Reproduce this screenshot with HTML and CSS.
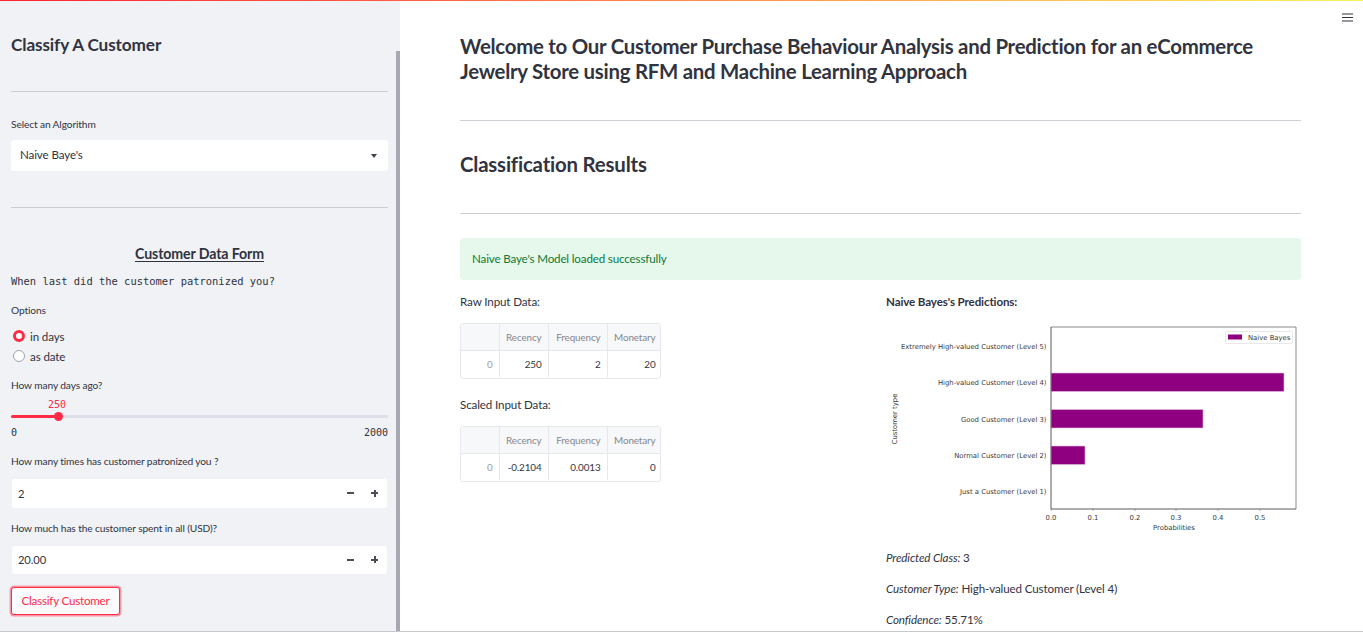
FILE: index.html
```html
<!DOCTYPE html>
<html lang="en">
<head>
<meta charset="utf-8">
<title>Customer Purchase Behaviour</title>
<link rel="stylesheet" href="styles.css">
</head>
<body>
<div class="topline"></div>
<div class="app">
  <aside class="sidebar">
    <div class="scrollthumb"></div>
    <h2 class="side-title">Classify A Customer</h2>
    <hr class="side-rule rule-one">
    <div class="label label-algo">Select an Algorithm</div>
    <div class="select"><span>Naive Baye's</span><span class="caret"></span></div>
    <hr class="side-rule rule-two">
    <h3 class="form-title">Customer Data Form</h3>
    <div class="mono-line">When last did the customer patronized you?</div>
    <div class="label label-options">Options</div>
    <div class="radio-row radio-first"><span class="radio radio-on"></span><span>in days</span></div>
    <div class="radio-row"><span class="radio"></span><span>as date</span></div>
    <div class="label label-days">How many days ago?</div>
    <div class="slider-value">250</div>
    <div class="slider"><div class="slider-fill"></div><div class="slider-knob"></div></div>
    <div class="slider-ends"><span>0</span><span>2000</span></div>
    <div class="label label-times">How many times has customer patronized you ?</div>
    <div class="number tall"><span>2</span><span class="steppers"><span class="step-minus"></span><span class="step-plus"></span></span></div>
    <div class="label label-spent">How much has the customer spent in all (USD)?</div>
    <div class="number"><span>20.00</span><span class="steppers"><span class="step-minus"></span><span class="step-plus"></span></span></div>
    <button class="classify" type="button">Classify Customer</button>
  </aside>
  <main class="main">
    <svg class="menu" width="11" height="9" viewBox="0 0 11 9"><path d="M0 1h11M0 4.500h11M0 8h11" stroke="#31333f" stroke-width="1.1" fill="none"/></svg>
    <h1 class="headline">Welcome to Our Customer Purchase Behaviour Analysis and Prediction for an eCommerce Jewelry Store using RFM and Machine Learning Approach</h1>
    <hr class="main-rule rule-a">
    <h2 class="section">Classification Results</h2>
    <hr class="main-rule rule-b">
    <div class="alert">Naive Baye's Model loaded successfully</div>
    <div class="columns">
      <section class="col-left">
        <p class="caption">Raw Input Data:</p>
        <div class="table-wrap">
          <table>
            <tr><th></th><th>Recency</th><th>Frequency</th><th>Monetary</th></tr>
            <tr><td class="idx">0</td><td>250</td><td>2</td><td>20</td></tr>
          </table>
        </div>
        <p class="caption caption-two">Scaled Input Data:</p>
        <div class="table-wrap">
          <table>
            <tr><th></th><th>Recency</th><th>Frequency</th><th>Monetary</th></tr>
            <tr><td class="idx">0</td><td>-0.2104</td><td>0.0013</td><td>0</td></tr>
          </table>
        </div>
      </section>
      <section class="col-right">
        <p class="caption strong">Naive Bayes's Predictions:</p>
        <svg class="chart" width="415" height="215" viewBox="0 0 415 215">
          <g fill="#8f0080" stroke="#e5bfe1" stroke-width="0.6">
            <rect x="165" y="50" width="233" height="18.5"/>
            <rect x="165" y="86.5" width="152" height="18.5"/>
            <rect x="165" y="123" width="34" height="18.5"/>
          </g>
          <path d="M165 4H410V186" fill="none" stroke="#8a8a8a" stroke-width="1"/>
          <path d="M165 4V186H410" fill="none" stroke="#5a5a5a" stroke-width="1"/>
          <path d="M165 186V188M207 186V188M249 186V188M290 186V188M332 186V188M374 186V188" stroke="#777" stroke-width="0.6" fill="none"/>
          <g class="chart-text" text-anchor="end">
            <text x="160.500" y="25.500">Extremely High-valued Customer (Level 5)</text>
            <text x="160.500" y="62">High-valued Customer (Level 4)</text>
            <text x="160.500" y="98.500">Good Customer (Level 3)</text>
            <text x="160.500" y="134.500">Normal Customer (Level 2)</text>
            <text x="160.500" y="171">Just a Customer (Level 1)</text>
          </g>
          <g class="chart-text" text-anchor="middle">
            <text x="165" y="197">0.0</text>
            <text x="207" y="197">0.1</text>
            <text x="249" y="197">0.2</text>
            <text x="290" y="197">0.3</text>
            <text x="332" y="197">0.4</text>
            <text x="374" y="197">0.5</text>
            <text x="288" y="206.500">Probabilities</text>
            <text transform="translate(10.500 96) rotate(-90)">Customer type</text>
          </g>
          <rect x="339.500" y="8.500" width="67" height="12" rx="1" fill="#fff" stroke="#dedede" stroke-width="0.7"/>
          <rect x="342" y="11.500" width="14" height="5" fill="#8f0080"/>
          <text class="chart-text" x="362" y="16.800">Naive Bayes</text>
        </svg>
        <p class="result result-one"><em>Predicted Class:</em> 3</p>
        <p class="result"><em>Customer Type:</em> High-valued Customer (Level 4)</p>
        <p class="result"><em>Confidence:</em> 55.71%</p>
      </section>
    </div>
  </main>
</div>
</body>
</html>
```

FILE: styles.css
```css
* { box-sizing: border-box; }
html, body { margin: 0; height: 100%; overflow: hidden; }
body {
  font-family: "Lato", "Noto Sans", sans-serif;
  color: #31333f;
  background: #fff;
  font-size: 11.6px;
  letter-spacing: -0.12px;
  display: flex;
  flex-direction: column;
}
.topline { height: 1px; flex: none; background: linear-gradient(90deg, #ff2233, #ff8a50 50%, #fdf25c); }
.app { display: flex; height: 630px; flex: none; }
body::after { content: ""; display: block; height: 1px; background: #c9c9cc; flex: none; }

.sidebar {
  position: relative;
  width: 400px;
  flex: none;
  background: #f0f2f6;
  padding: 0 12px 0 11px;
  overflow: hidden;
}
.scrollthumb { position: absolute; right: 0; top: 50px; bottom: 0; width: 4px; background: #a8a8b3; }
.side-title { margin: 35px 0 0; font-size: 17.2px; line-height: 18px; font-weight: 700; }
.side-rule { border: 0; height: 1px; background: #cccdd3; margin: 0; }
.rule-one { margin-top: 37px; }
.label { font-size: 10.2px; line-height: 12px; }
.label-algo { margin-top: 26px; }
.select {
  margin-top: 10px; height: 31px; background: #fff; border-radius: 3px;
  display: flex; align-items: center; justify-content: space-between; padding: 0 11px 2px 9px;
}
.caret { width: 0; height: 0; margin-top: 2px; border-left: 3.5px solid transparent; border-right: 3.5px solid transparent; border-top: 4px solid #3f414d; }
.rule-two { margin-top: 36px; }
.form-title { margin: 37px 0 0; font-size: 14.2px; line-height: 17px; font-weight: 700; text-align: center; text-decoration: underline; text-underline-offset: 2px; }
.mono-line { margin-top: 13px; font-family: "DejaVu Sans Mono", monospace; font-size: 10.45px; line-height: 12px; letter-spacing: 0; white-space: pre; }
.label-options { margin-top: 17px; }
.radio-row { display: flex; align-items: center; gap: 5px; height: 20px; padding-left: 2px; }
.radio-first { margin-top: 10px; }
.radio { width: 12px; height: 12px; border-radius: 50%; background: #fff; border: 1px solid #a3a3ab; }
.radio-on { border: 3.5px solid #ff2b47; background: #fff; }
.label-days { margin-top: 13px; }
.slider-value { margin-top: 8px; padding-left: 37px; font-family: "DejaVu Sans Mono", monospace; font-size: 10px; line-height: 12px; letter-spacing: 0; color: #ff2b47; }
.slider { position: relative; height: 3px; margin-top: 4px; background: #dde0ea; border-radius: 2px; }
.slider-fill { width: 48px; height: 3px; background: #ff2b47; border-radius: 2px; }
.slider-knob { position: absolute; left: 43px; top: -3px; width: 9px; height: 9px; border-radius: 50%; background: #ff2b47; }
.slider-ends { display: flex; justify-content: space-between; margin-top: 9px; font-family: "DejaVu Sans Mono", monospace; font-size: 10px; line-height: 12px; letter-spacing: 0; color: #31333f; }
.label-times { margin-top: 16px; }
.number {
  margin: 12px 1px 0; height: 28px; background: #fff; border-radius: 3px;
  display: flex; align-items: center; justify-content: space-between; padding: 0 9px 1px 6px; font-size: 11.2px;
}
.tall { height: 29px; }
.label-spent { margin-top: 14px; }
.steppers { display: flex; gap: 17px; align-items: center; }
.step-minus, .step-plus { position: relative; width: 7px; height: 7px; display: block; }
.step-minus::before, .step-plus::before { content: ""; position: absolute; left: 0; right: 0; top: 2.500px; height: 2px; background: #4b4d59; }
.step-plus::after { content: ""; position: absolute; top: 0; bottom: 0; left: 2.500px; width: 2px; background: #4b4d59; }
.classify {
  display: block; margin-top: 13px; width: 109px; height: 28px; padding: 0 0 2px;
  font: inherit; letter-spacing: -0.2px; color: #ff2b47; background: #fbfbfd;
  border: 1px solid #ff2b47; border-radius: 3px; box-shadow: 0 0 0 1.5px rgba(255, 43, 71, .45);
}

.main { position: relative; flex: 1; min-width: 0; padding: 0 62px 0 60px; overflow: hidden; }
.menu { position: absolute; right: 10px; top: 12px; }
.headline { margin: 33px 0 0; font-size: 20.4px; line-height: 25px; font-weight: 700; letter-spacing: -0.26px; }
.main-rule { border: 0; height: 1px; background: #cfd0d5; margin: 0; }
.rule-a { margin-top: 36px; }
.section { margin: 31px 0 0; font-size: 20.4px; line-height: 24px; font-weight: 700; letter-spacing: -0.19px; }
.rule-b { margin-top: 37px; }
.alert { margin-top: 24px; height: 42px; line-height: 41px; padding-left: 12px; background: #e6f7ec; color: #0b7a35; border-radius: 3px; letter-spacing: -0.15px; }
.columns { display: flex; }
.col-left { width: 426px; flex: none; }
.col-right { flex: 1; }
.caption { margin: 15px 0 0; line-height: 14px; }
.strong { font-weight: 700; }
.caption-two { margin-top: 19px; }
.table-wrap { margin-top: 14px; width: 201px; height: 56px; overflow: hidden; border: 1px solid #e6e8ee; border-radius: 3px; }
table { border-collapse: collapse; table-layout: fixed; width: 201px; font-size: 9.9px; }
th, td { height: 27px; padding: 0 6px; text-align: right; border: 1px solid #e6e8ee; font-weight: 400; white-space: nowrap; }
tr:first-child th { border-top: 0; height: 26px; }
tr th:first-child, tr td:first-child { border-left: 0; width: 38px; }
tr:last-child td { border-bottom: 0; }
th { background: #f7f8fa; color: #85878f; }
th:nth-child(2), td:nth-child(2) { width: 49px; }
th:nth-child(3), td:nth-child(3) { width: 59px; }
th:nth-child(4), td:nth-child(4) { width: 55px; }
.idx { color: #9a9ca4; }
.chart { display: block; margin-top: 14px; }
.chart-text { font-family: "DejaVu Sans", sans-serif; font-size: 6.85px; letter-spacing: 0; fill: #3a3a3a; }
.result { margin: 17px 0 0; line-height: 14px; }
.result-one { margin-top: 13px; }
```
